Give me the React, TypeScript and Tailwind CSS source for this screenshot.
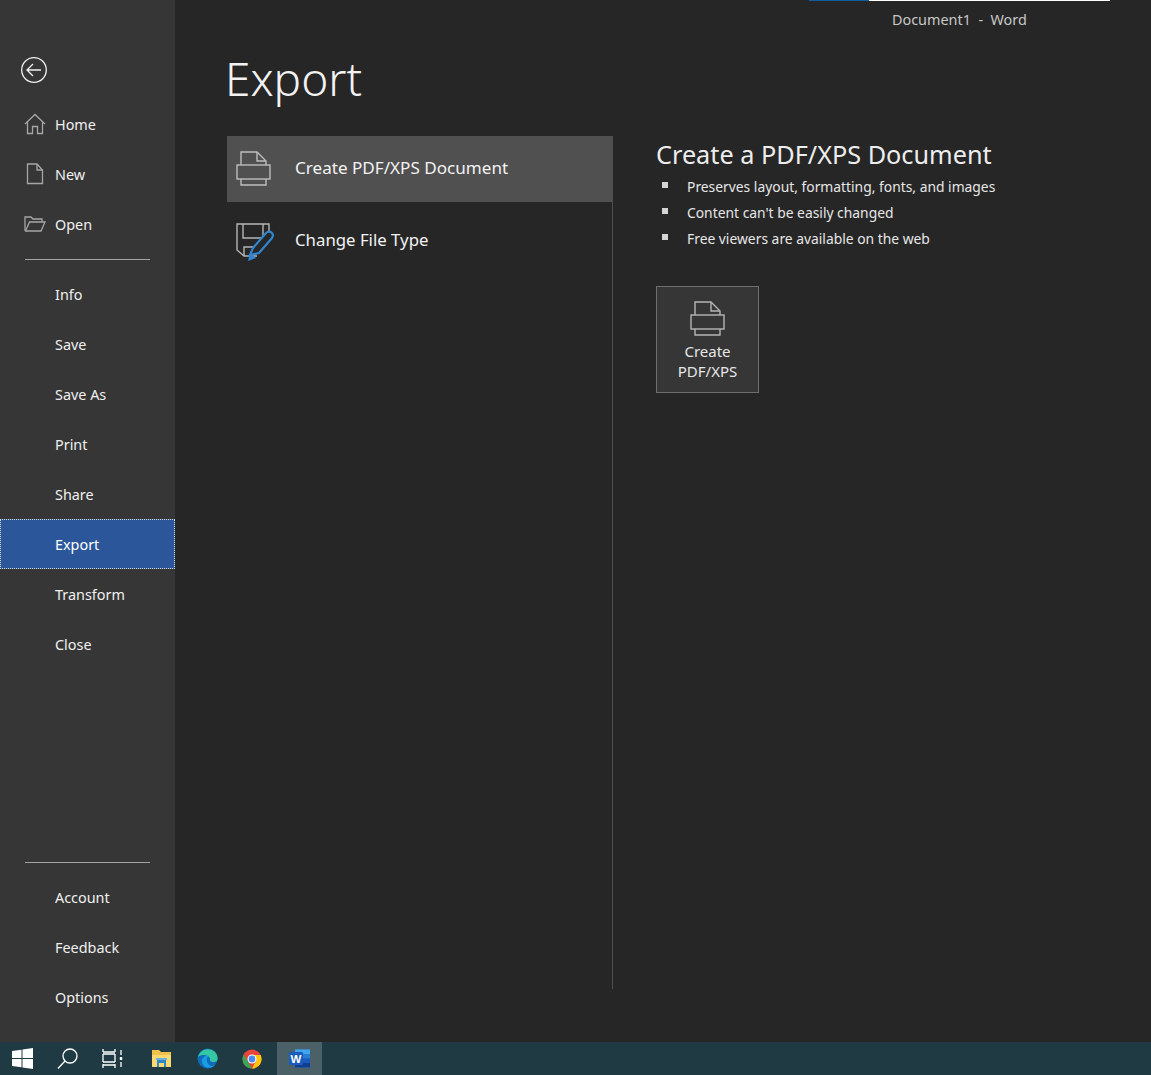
import React from 'react';

const font = { fontFamily: '"Noto Sans", "Open Sans", sans-serif' };

const HomeIcon = () => (
  <svg width="22" height="22" viewBox="0 0 22 22" fill="none" stroke="#a6a6a6" strokeWidth="1.3">
    <path d="M1 11 L11 1.5 L21 11" />
    <path d="M3.5 9 V20.5 H8.5 V13.5 H13.5 V20.5 H18.5 V9" />
  </svg>
);

const NewIcon = () => (
  <svg width="18" height="22" viewBox="0 0 18 22" fill="none" stroke="#a6a6a6" strokeWidth="1.3">
    <path d="M1.5 1 H11 L16.5 7 V20.5 H1.5 Z" />
    <path d="M11 1 V7 H16.5" />
  </svg>
);

const OpenIcon = () => (
  <svg width="22" height="18" viewBox="0 0 22 18" fill="none" stroke="#a6a6a6" strokeWidth="1.3">
    <path d="M1 16 V2 H7 L9 4 H18 V7" />
    <path d="M1 16 H17 L21 7 H5.5 L1.5 16" />
  </svg>
);

const PrinterIcon = ({ stroke = '#bdbdbd' }: { stroke?: string }) => (
  <svg width="35" height="36" viewBox="0 0 35 36" fill="none" stroke={stroke} strokeWidth="1.4">
    <path d="M5 14 V1 H21 L30 10 V14" />
    <path d="M21 1 V10 H30" />
    <rect x="1" y="14" width="33" height="14" />
    <path d="M5 28 V34 H30 V28" />
  </svg>
);

const ChangeTypeIcon = () => (
  <svg width="38" height="38" viewBox="0 0 38 38">
    <g fill="none" stroke="#b5b5b5" strokeWidth="1.4">
      <path d="M21 33 H8 L1 27 V1 H33 V10" />
      <path d="M7 1 V15 H27 V1" />
      <path d="M8 33 V24 H18" />
    </g>
    <path d="M14 32 L17 25 L30 10 Q33 7.5 35.5 9.5 Q38 12 36 15 L23 30 Z" fill="#262626" stroke="#2f86cf" strokeWidth="2.2" />
    <path d="M12 38 L14 30 L20 35 Z" fill="#2f86cf" />
  </svg>
);

const WindowsLogo = () => (
  <svg width="21" height="21" viewBox="0 0 21 21" fill="#fff">
    <path d="M0 3 L9.5 1.7 V10 H0 Z" />
    <path d="M10.5 1.5 L21 0 V10 H10.5 Z" />
    <path d="M0 11 H9.5 V19.3 L0 18 Z" />
    <path d="M10.5 11 H21 V21 L10.5 19.5 Z" />
  </svg>
);

const SearchIcon = () => (
  <svg width="21" height="21" viewBox="0 0 21 21" fill="none" stroke="#fff" strokeWidth="1.3">
    <circle cx="13" cy="8" r="7" />
    <path d="M8 13 L1 20.5" />
  </svg>
);

const TaskViewIcon = () => (
  <svg width="21" height="19" viewBox="0 0 21 19" fill="none" stroke="#fff" strokeWidth="1.3">
    <path d="M1 5 H13 M1 13 H13 M1 5 V13 M13 5 V13" />
    <path d="M1 0 V3 M13 0 V3 M1 15 V19 M13 15 V19 M1 16 H13 M1 3 H13" />
    <path d="M19 1 V6 M19 13 V18" />
    <rect x="17.8" y="8" width="2.4" height="3" fill="#fff" stroke="none" />
  </svg>
);

const ExplorerIcon = () => (
  <svg width="19" height="19" viewBox="0 0 19 19">
    <path d="M0 1 H7 L9 3 H19 V17 H0 Z" fill="#f0c14b" />
    <path d="M0 6 H19 V18 H0 Z" fill="#fbd971" />
    <path d="M5 10 H14 V18 H12 V14 H7 V18 H5 Z" fill="#2f88c9" />
    <path d="M4 9 H15 V11 H4 Z" fill="#6bb2dd" />
  </svg>
);

const EdgeIcon = () => (
  <svg width="21" height="21" viewBox="0 0 21 21">
    <circle cx="10.5" cy="10.5" r="10" fill="#0f6cbd" />
    <path d="M1 9 C3 1 13 -1 18 4 C21 7 21 11 20 13 C17 15 12 14 13 11 C13 8 6 5 1 9 Z" fill="#35c6a3" />
    <path d="M5 13 C5 9 9 7 12 8 C9 9 9 14 12 17 C14 18.5 16 18 18 17 C14 22 5 20 5 13 Z" fill="#1b9de2" />
  </svg>
);

const ChromeIcon = () => (
  <svg width="20" height="20" viewBox="0 0 20 20">
    <circle cx="10" cy="10" r="9.5" fill="#e8453c" />
    <path d="M1.6 5.5 L6 13 L10 19.5 A9.5 9.5 0 0 1 1.6 5.5 Z" fill="#34a853" />
    <path d="M10 19.5 L14 12 L10 6 H18.7 A9.5 9.5 0 0 1 10 19.5 Z" fill="#f9c80e" />
    <circle cx="10" cy="10" r="4.5" fill="#fff" />
    <circle cx="10" cy="10" r="3.4" fill="#4a8af4" />
  </svg>
);

const WordIcon = () => (
  <svg width="21" height="19" viewBox="0 0 21 19">
    <rect x="6" y="0.5" width="15" height="18" rx="1" fill="#2b7cd3" />
    <rect x="6" y="0.5" width="15" height="4.5" fill="#41a5ee" />
    <rect x="6" y="9.5" width="15" height="4.5" fill="#185abd" />
    <rect x="6" y="14" width="15" height="4.5" fill="#103f91" />
    <rect x="0" y="3" width="14" height="13" rx="1" fill="#1a5cbe" />
    <text x="7" y="13.5" textAnchor="middle" fontSize="11.5" fontWeight="700" fill="#fff" fontFamily="Liberation Sans, sans-serif">W</text>
  </svg>
);

const NavRow = ({ label, icon, active }: { label: string; icon?: React.ReactNode; active?: boolean }) => (
  <div
    className={`h-[50px] flex items-center text-[14.4px] ${active ? 'bg-[#2b579a] border border-dotted border-[#d8d8d8] text-white pl-[54px]' : 'pl-[55px] text-[#f0f0f0] relative'}`}
  >
    {icon && <span className="absolute left-[24px] w-[22px] flex justify-center">{icon}</span>}
    <span className="mt-[2px]">{label}</span>
  </div>
);

const Divider = () => <div className="h-px bg-[#a3a3a3] mx-[25px] mt-[10px] mb-[9px]" />;

const Bullet = ({ children }: { children: React.ReactNode }) => (
  <li className="h-[26px] flex items-center text-[13.85px] text-[#e6e6e6]">
    <span className="w-[6px] h-[6px] bg-[#d4d4d4] ml-[6px] mr-[19px] -mt-[5px]" />
    {children}
  </li>
);

export default function App() {
  return (
    <div className="w-[1151px] h-[1075px] flex flex-col overflow-hidden bg-[#262626]" style={font}>
      <div className="flex-1 flex min-h-0">
        <aside className="w-[175px] bg-[#363636] flex flex-col">
          <div className="h-[99px] pt-[57px] pl-[21px]">
            <svg width="26" height="26" viewBox="0 0 26 26" fill="none" stroke="#f2f2f2" strokeWidth="1.3">
              <circle cx="13" cy="13" r="12.3" />
              <path d="M6 13 H20 M12 7 L6 13 L12 19" />
            </svg>
          </div>
          <NavRow label="Home" icon={<HomeIcon />} />
          <NavRow label="New" icon={<NewIcon />} />
          <NavRow label="Open" icon={<OpenIcon />} />
          <Divider />
          <NavRow label="Info" />
          <NavRow label="Save" />
          <NavRow label="Save As" />
          <NavRow label="Print" />
          <NavRow label="Share" />
          <NavRow label="Export" active />
          <NavRow label="Transform" />
          <NavRow label="Close" />
          <div className="flex-1" />
          <Divider />
          <NavRow label="Account" />
          <NavRow label="Feedback" />
          <NavRow label="Options" />
          <div className="h-[20px]" />
        </aside>

        <main className="flex-1 flex flex-col min-w-0">
          <div className="h-[1px] ml-[634px] w-[301px] flex">
            <div className="w-[60px] bg-[#0f5c9e]" />
            <div className="flex-1 bg-white" />
          </div>
          <div className="h-[38px] flex items-center pl-[717px] text-[14.4px] text-[#c8c8c8] whitespace-pre">
            Document1  -  Word
          </div>
          <h1 className="pl-[50px] h-[97px] flex items-center text-[46px] font-light text-[#f2f2f2] leading-none pb-[20px]">
            Export
          </h1>
          <div className="flex flex-1 pl-[52px] pb-[53px] min-h-0">
            <div className="w-[386px] border-r border-[#4d4d4d] flex flex-col">
              <div className="h-[66px] w-[385px] bg-[#505050] flex items-center pl-[9px] gap-[24px] text-[17.1px] text-[#f2f2f2]">
                <PrinterIcon />
                <span className="-mt-[2px]">Create PDF/XPS Document</span>
              </div>
              <div className="h-[66px] mt-[5px] flex items-center pl-[9px] gap-[21px] text-[16.8px] text-[#f2f2f2]">
                <span className="mt-[4px]"><ChangeTypeIcon /></span>
                <span>Change File Type</span>
              </div>
            </div>
            <div className="pl-[43px] flex flex-col items-start">
              <h2 className="text-[25.25px] text-[#ededed] leading-[36px]">Create a PDF/XPS Document</h2>
              <ul className="mt-[2px]">
                <Bullet>Preserves layout, formatting, fonts, and images</Bullet>
                <Bullet>Content can't be easily changed</Bullet>
                <Bullet>Free viewers are available on the web</Bullet>
              </ul>
              <button className="mt-[34px] w-[103px] h-[107px] bg-[#363636] border border-[#6e6e6e] flex flex-col items-center pt-[14px] text-[15px] leading-[20px] text-[#e6e6e6]">
                <PrinterIcon stroke="#b5b5b5" />
                <span className="mt-[4px]">Create</span>
                <span>PDF/XPS</span>
              </button>
            </div>
          </div>
        </main>
      </div>

      <footer className="h-[33px] bg-[#203a43] flex items-center">
        <span className="w-[45px] flex justify-center"><WindowsLogo /></span>
        <span className="w-[45px] flex justify-center"><SearchIcon /></span>
        <span className="w-[45px] flex justify-center"><TaskViewIcon /></span>
        <span className="w-[52px] flex justify-center"><ExplorerIcon /></span>
        <span className="w-[40px] flex justify-center"><EdgeIcon /></span>
        <span className="w-[50px] flex justify-center"><ChromeIcon /></span>
        <span className="w-[45px] h-full bg-[#4c6068] flex items-center justify-center"><WordIcon /></span>
      </footer>
    </div>
  );
}
